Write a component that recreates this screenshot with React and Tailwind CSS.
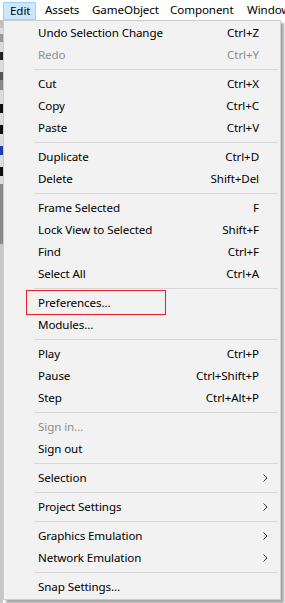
import React from "react";

const items = [
  { t: "Undo Selection Change", s: "Ctrl+Z" },
  { t: "Redo", s: "Ctrl+Y", d: true },
  "sep",
  { t: "Cut", s: "Ctrl+X" },
  { t: "Copy", s: "Ctrl+C" },
  { t: "Paste", s: "Ctrl+V" },
  "sep",
  { t: "Duplicate", s: "Ctrl+D" },
  { t: "Delete", s: "Shift+Del" },
  "sep",
  { t: "Frame Selected", s: "F" },
  { t: "Lock View to Selected", s: "Shift+F" },
  { t: "Find", s: "Ctrl+F" },
  { t: "Select All", s: "Ctrl+A" },
  "sep",
  { t: "Preferences..." },
  { t: "Modules..." },
  "sep",
  { t: "Play", s: "Ctrl+P" },
  { t: "Pause", s: "Ctrl+Shift+P" },
  { t: "Step", s: "Ctrl+Alt+P" },
  "sep",
  { t: "Sign in...", d: true },
  { t: "Sign out" },
  "sep",
  { t: "Selection", a: true },
  "sep",
  { t: "Project Settings", a: true },
  "sep",
  { t: "Graphics Emulation", a: true },
  { t: "Network Emulation", a: true },
  "sep",
  { t: "Snap Settings..." },
];

function Chevron() {
  return (
    <svg width="5" height="8" viewBox="0 0 5 8" className="block">
      <polyline points="0.5,0.5 4,4 0.5,7.5" fill="none" stroke="#333" strokeWidth="1" />
    </svg>
  );
}

export default function App() {
  return (
    <div
      className="relative w-[285px] h-[603px] bg-white overflow-hidden text-[11.6px] tracking-[-0.1px] text-black"
      style={{ fontFamily: '"Noto Sans", "Open Sans", sans-serif' }}
    >
      {/* menubar */}
      <div className="h-[20px] flex items-stretch bg-white">
        <div className="ml-[3px] mt-[2px] w-[33px] h-[18px] shrink-0 bg-[#cce8ff] border border-[#99d1ff] flex items-center pl-[6px] leading-none">
          Edit
        </div>
        <div className="pl-[9px] flex items-center leading-none whitespace-nowrap">
          <span className="w-[47px] shrink-0">Assets</span>
          <span className="w-[78px] shrink-0">GameObject</span>
          <span className="w-[77px] shrink-0">Component</span>
          <span>Window</span>
        </div>
      </div>

      {/* underlying content strip on the left */}
      <div className="flex flex-col w-[3px] h-[583px] bg-[#dcdcdc]">
        <div className="h-[8px] bg-[#c0c0c0]" />
        <div className="h-[6px]" />
        <div className="h-[8px] bg-[#9a9a9a]" />
        <div className="h-[10px]" />
        <div className="h-[8px] bg-[#222]" />
        <div className="h-[12px]" />
        <div className="h-[8px] bg-[#555]" />
        <div className="h-[10px] bg-[#888]" />
        <div className="h-[14px]" />
        <div className="h-[9px] bg-[#111]" />
        <div className="h-[12px]" />
        <div className="h-[9px] bg-[#111]" />
        <div className="h-[12px]" />
        <div className="h-[9px] bg-[#1a3fb0]" />
        <div className="h-[12px]" />
        <div className="h-[9px] bg-[#111]" />
        <div className="h-[8px]" />
        <div className="h-[60px] bg-[#8a8a8a]" />
        <div className="flex-1 bg-[#c8c8c8]" />
      </div>

      {/* dropdown menu */}
      <div className="absolute left-[3px] top-[20px] w-[278px] h-[580px] bg-[#f2f2f2] border border-[#cccccc] py-[1px] shadow-[3px_3px_2px_rgba(0,0,0,0.35)]">
        {items.map((it, i) =>
          it === "sep" ? (
            <div key={i} className="h-[7px] flex items-center ml-[30px] mr-[2px]">
              <div className="h-px w-full bg-[#d7d7d7]" />
            </div>
          ) : (
            <div
              key={i}
              className={`h-[22px] flex items-center pl-[34px] whitespace-nowrap ${
                it.d ? "text-[#8d8d8d]" : "text-black"
              }`}
            >
              <span className="flex-1">{it.t}</span>
              {it.s && <span className="pr-[21px]">{it.s}</span>}
              {it.a && (
                <span className="pr-[12px]">
                  <Chevron />
                </span>
              )}
            </div>
          )
        )}
      </div>

      {/* red highlight box */}
      <div className="absolute left-[26px] top-[290px] w-[140px] h-[25px] border border-[#e8202c]" />
    </div>
  );
}
